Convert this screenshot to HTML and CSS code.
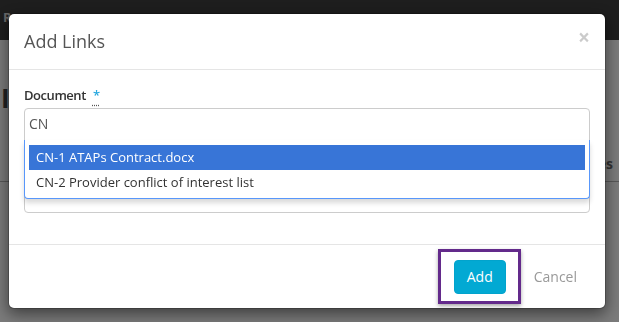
FILE: index.html
```html
<!DOCTYPE html>
<html lang="en">
<head>
<meta charset="utf-8">
<title>Add Links</title>
<link rel="stylesheet" href="styles.css">
</head>
<body>
<div class="page">
  <header class="topbar"><span class="brand">R</span></header>
  <main class="content">
    <h1 class="page-title">I</h1>
    <div class="table-head"><span class="th">Notes</span></div>
  </main>
</div>
<div class="backdrop"></div>
<div class="modal">
  <div class="modal-dialog">
    <div class="modal-content">
      <div class="modal-header">
        <h4 class="modal-title">Add Links</h4>
        <button class="close" type="button">&times;</button>
      </div>
      <div class="modal-body">
        <div class="form-group">
          <label class="control-label"><span class="label-text">Document</span><abbr class="req" title="required">*</abbr></label>
          <div class="select">
            <div class="select-input">CN</div>
            <div class="dropdown">
              <ul class="results">
                <li class="result highlighted">CN-1 ATAPs Contract.docx</li>
                <li class="result">CN-2 Provider conflict of interest list</li>
              </ul>
            </div>
          </div>
        </div>
      </div>
      <div class="modal-footer">
        <span class="add-wrap">
          <button class="btn btn-primary" type="button">Add</button>
          <span class="callout"></span>
        </span>
        <button class="btn btn-link" type="button">Cancel</button>
      </div>
    </div>
  </div>
</div>
</body>
</html>
```
FILE: styles.css
```css
* { box-sizing: border-box; }
html, body { margin: 0; padding: 0; }
body {
  width: 619px;
  height: 322px;
  overflow: hidden;
  background: #f6f6f6;
  font-family: "Open Sans", "Noto Sans", sans-serif;
  color: #333;
}
.page { width: 619px; }
.topbar {
  height: 40px;
  background: #3c3c3c;
  padding-left: 3px;
}
.brand {
  display: block;
  font-size: 13px;
  font-weight: 700;
  line-height: 34px;
  color: #cfcfcf;
}
.content { padding: 0; }
.page-title {
  margin: 40px 0 0 1px;
  font-size: 26px;
  line-height: 36px;
  font-weight: 700;
  color: #444;
}
.table-head {
  margin-top: 30px;
  display: flex;
  justify-content: flex-end;
  padding: 8px 6px 7px 0;
  border-bottom: 1px solid #b0b0b0;
}
.th {
  font-size: 14px;
  line-height: 20px;
  font-weight: 700;
  color: #666;
}
.backdrop {
  position: fixed;
  inset: 0;
  background: rgba(0, 0, 0, 0.5);
}
.modal {
  position: fixed;
  inset: 0;
}
.modal-dialog {
  margin: 13px 0 0 8px;
  width: 598px;
}
.modal-content {
  background: #fff;
  border: 1px solid rgba(0, 0, 0, 0.2);
  border-radius: 6px;
  box-shadow: 0 5px 15px rgba(0, 0, 0, 0.5);
  background-clip: padding-box;
}
.modal-header {
  display: flex;
  justify-content: space-between;
  align-items: flex-start;
  padding: 15px;
  border-bottom: 1px solid #e5e5e5;
}
.modal-title {
  margin: 0;
  font-size: 18px;
  line-height: 25px;
  font-weight: 400;
  color: #555;
}
.close {
  margin: -2px 0 0 0;
  padding: 0;
  border: 0;
  background: transparent;
  font-family: "Open Sans", sans-serif;
  font-size: 21px;
  font-weight: 700;
  line-height: 21px;
  color: #000;
  opacity: 0.2;
}
.modal-body { padding: 15px; }
.form-group { margin-bottom: 16px; }
.control-label {
  display: block;
  margin-bottom: 3px;
  font-size: 13px;
  line-height: 20px;
  font-weight: 600;
  color: #333;
}
.label-text { letter-spacing: -0.45px; }
.req {
  margin-left: 7px;
  color: #2aa9df;
  text-decoration: underline dotted #555;
  text-underline-offset: 5px;
  cursor: help;
}
.select { position: relative; }
.select-input {
  height: 105px;
  border: 1px solid #ccc;
  border-radius: 4px;
  padding: 5px 4px;
  font-size: 14px;
  line-height: 20px;
  color: #555;
}
.dropdown {
  position: absolute;
  top: 32px;
  left: 0;
  right: 0;
  background: #fff;
  border: 1px solid #5897fb;
  border-top: 0;
  border-radius: 0 0 4px 4px;
  box-shadow: 0 4px 5px rgba(0, 0, 0, 0.15);
  padding-bottom: 3px;
}
.results {
  list-style: none;
  margin: 5px 4px 0 4px;
  padding: 0;
}
.result {
  padding: 3px 7px 4px;
  font-size: 13px;
  line-height: 18px;
  color: #333;
}
.result.highlighted {
  background: #3875d7;
  color: #fff;
}
.modal-footer {
  display: flex;
  justify-content: flex-end;
  align-items: center;
  gap: 15px;
  padding: 15px 15px 14px 15px;
  border-top: 1px solid #e5e5e5;
}
.add-wrap {
  position: relative;
  display: inline-flex;
}
.btn {
  font-family: "Open Sans", sans-serif;
  font-size: 14px;
  line-height: 20px;
  padding: 6px 12px;
  border: 1px solid transparent;
  border-radius: 4px;
  background: transparent;
}
.btn-primary {
  background: #02a9d3;
  border-color: #02a3cc;
  color: #fff;
}
.btn-link { color: #999; }
.callout {
  position: absolute;
  top: -11px;
  left: -16px;
  right: -15px;
  bottom: -10px;
  border: 3px solid #632a8b;
  box-shadow: 0 2px 4px rgba(0, 0, 0, 0.35);
}
```
